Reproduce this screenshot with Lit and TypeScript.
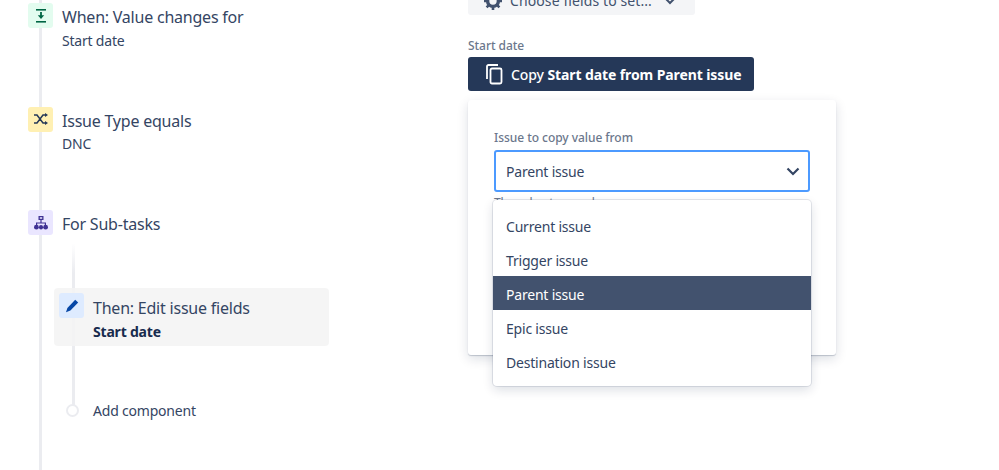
import { LitElement, html, css } from "lit";
import { customElement } from "lit/decorators.js";

@customElement("app-root")
export class AppRoot extends LitElement {
  static styles = css`
    :host { display: flex; width: 999px; height: 470px; overflow: hidden; background: #fff; color: #344563;
      font-family: "Noto Sans", "Open Sans", sans-serif; font-size: 14px; letter-spacing: -0.2px; }
    * { box-sizing: border-box; }
    svg { display: block; }
    .left { position: relative; width: 468px; flex: none; padding: 3px 0 0 28px; }
    .rail { position: absolute; left: 39px; top: 0; bottom: 0; width: 3px; background: #ebecf0; }
    .subrail { position: absolute; left: 72px; top: 243px; height: 162px; width: 3px;
      background: linear-gradient(#fff, #ebecf0 30px); }
    .step { position: relative; display: flex; gap: 9px; height: 103.5px; }
    .tile { width: 25px; height: 25px; flex: none; border-radius: 3px; display: flex; align-items: center; justify-content: center; }
    .green { background: #e3fcef; color: #006644; }
    .yellow { background: #fff0b3; color: #253858; }
    .purple { background: #eae6ff; color: #403294; }
    .blue { background: #deebff; color: #0747a6; }
    .title { font-size: 16px; line-height: 24px; margin-top: 2px; white-space: nowrap; letter-spacing: -0.22px; }
    .sub { font-size: 14px; line-height: 20px; margin-top: 2px; white-space: nowrap; }
    .sub.tight { margin-top: 1px; }
    .sub.strong { font-weight: 700; color: #172b4d; }
    .nested { margin-left: 26px; width: 275px; }
    .selected { position: relative; display: flex; gap: 9px; height: 58px; padding: 5px; margin-top: -25.5px;
      background: rgba(244, 244, 244, 0.9); border-radius: 4px; }
    .selected .title { margin-top: 3px; }
    .add { position: relative; display: flex; align-items: center; gap: 14px; margin: 54px 0 0 12px; height: 20px; }
    .dot { width: 13px; height: 13px; border-radius: 50%; border: 2px solid #ebecf0; background: #fff; flex: none; }
    .right { position: relative; width: 368px; flex: none; margin-top: -17px; }
    .choose { width: 227px; height: 32px; background: #f4f5f7; border-radius: 3px; display: flex; align-items: center;
      padding: 3px 0 0 15px; gap: 7px; color: #42526e; font-size: 14px; white-space: nowrap; letter-spacing: 0.1px; }
    .caret { margin-left: 5px; }
    .field-label { font-size: 12px; font-weight: 500; color: #6b778c; line-height: 16px; letter-spacing: -0.05px; }
    .fl1 { margin-top: 22px; padding-top: 1px; height: 16px; }
    .copy { width: 286px; height: 34px; margin-top: 4px; background: #253858; color: #fff; border-radius: 3px; display: flex;
      align-items: center; gap: 5px; padding-left: 16px; font-size: 14px; font-weight: 500; white-space: nowrap; letter-spacing: -0.1px; }
    .copy b { font-weight: 700; }
    .card { position: relative; width: 368px; height: 255px; margin-top: 9px; padding: 30px 26px 0; background: #fff;
      border-radius: 3px; box-shadow: 0 1px 1px rgba(9,30,66,.2), 0 4px 12px rgba(9,30,66,.14); }
    .select { width: 316px; height: 42px; margin-top: 4px; border: 2px solid #4c9aff; border-radius: 3px; display: flex;
      align-items: center; justify-content: space-between; padding: 0 8px 0 10px; }
    .help { font-size: 12px; color: #6b778c; margin-top: 3px; line-height: 16px; }
    .menu { position: absolute; left: 25px; top: 100px; width: 318px; height: 186px; padding: 8px 0; background: #fff;
      border-radius: 4px; box-shadow: 0 0 0 1px rgba(9,30,66,.1), 0 4px 11px rgba(9,30,66,.14); }
    .opt { height: 34px; line-height: 38px; padding-left: 13px; overflow: hidden; }
    .opt.on { background: #42526e; color: #fff; }
  `;

  render() {
    return html`
      <div class="left">
        <div class="rail"></div>
        <div class="subrail"></div>
        <div class="step">
          <div class="tile green">
            <svg width="16" height="16" viewBox="0 0 16 16" fill="currentColor">
              <rect x="3" y="1" width="10" height="1.6"/><rect x="3" y="13" width="10" height="1.6"/>
              <rect x="7.1" y="4" width="1.8" height="4"/><path d="M4.8 7.2h6.4L8 11z"/>
            </svg>
          </div>
          <div><div class="title">When: Value changes for</div><div class="sub">Start date</div></div>
        </div>
        <div class="step">
          <div class="tile yellow">
            <svg width="16" height="16" viewBox="0 0 16 16" fill="none" stroke="currentColor" stroke-width="1.5">
              <path d="M1 4h3l6 8h3M1 12h3l6-8h3"/>
              <path d="M12 2l3 2-3 2zM12 10l3 2-3 2z" fill="currentColor" stroke="none"/>
            </svg>
          </div>
          <div><div class="title">Issue Type equals</div><div class="sub tight">DNC</div></div>
        </div>
        <div class="step">
          <div class="tile purple">
            <svg width="16" height="16" viewBox="0 0 16 16" fill="currentColor">
              <path d="M5.5 1h5v4h-5zM6.8 2.2v1.6h2.4V2.2z" fill-rule="evenodd"/>
              <path d="M7.4 5h1.2v2.4H13V10h-1.2V8.6H4.2V10H3V7.4h4.4z"/>
              <circle cx="3.4" cy="12.2" r="2.4"/><circle cx="12.6" cy="12.2" r="2.4"/>
              <rect x="6" y="10" width="4" height="4.6" rx="2"/>
            </svg>
          </div>
          <div><div class="title">For Sub-tasks</div></div>
        </div>
        <div class="nested">
          <div class="selected">
            <div class="tile blue">
              <svg width="16" height="16" viewBox="0 0 16 16" fill="currentColor">
                <path d="M11.2 1.8l3 2.6-7.8 8.2-4.4 1.6 1.4-4.3z"/>
              </svg>
            </div>
            <div><div class="title">Then: Edit issue fields</div><div class="sub strong">Start date</div></div>
          </div>
          <div class="add"><span class="dot"></span><span>Add component</span></div>
        </div>
      </div>
      <div class="right">
        <div class="choose">
          <svg width="20" height="20" viewBox="0 0 20 20" fill="none" stroke="currentColor" stroke-width="3.4">
            <circle cx="10" cy="10" r="5.4"/>
            <path stroke-width="2.6" d="M10 1v3M10 16v3M1 10h3M16 10h3M3.6 3.6l2 2M14.4 14.4l2 2M3.6 16.4l2-2M14.4 5.6l2-2"/>
          </svg>
          <span>Choose fields to set...</span>
          <svg class="caret" width="12" height="12" viewBox="0 0 12 12" fill="none" stroke="currentColor" stroke-width="2"><path d="M2 4l4 4 4-4"/></svg>
        </div>
        <div class="field-label fl1">Start date</div>
        <div class="copy">
          <svg width="22" height="22" viewBox="0 0 22 22" fill="none" stroke="#fff" stroke-width="1.8">
            <path d="M3 16V3.5a1.5 1.5 0 0 1 1.5-1.5H14"/>
            <rect x="6.5" y="5.5" width="11" height="15" rx="1.5"/>
          </svg>
          <span>Copy <b>Start date from Parent issue</b></span>
        </div>
        <div class="card">
          <div class="field-label">Issue to copy value from</div>
          <div class="select">
            <span>Parent issue</span>
            <svg width="14" height="14" viewBox="0 0 14 14" fill="none" stroke="#344563" stroke-width="2.2"><path d="M1.5 4.5L7 10l5.5-5.5"/></svg>
          </div>
          <div class="help">The value to copy here</div>
          <div class="menu">
            <div class="opt">Current issue</div>
            <div class="opt">Trigger issue</div>
            <div class="opt on">Parent issue</div>
            <div class="opt">Epic issue</div>
            <div class="opt">Destination issue</div>
          </div>
        </div>
      </div>
    `;
  }
}
